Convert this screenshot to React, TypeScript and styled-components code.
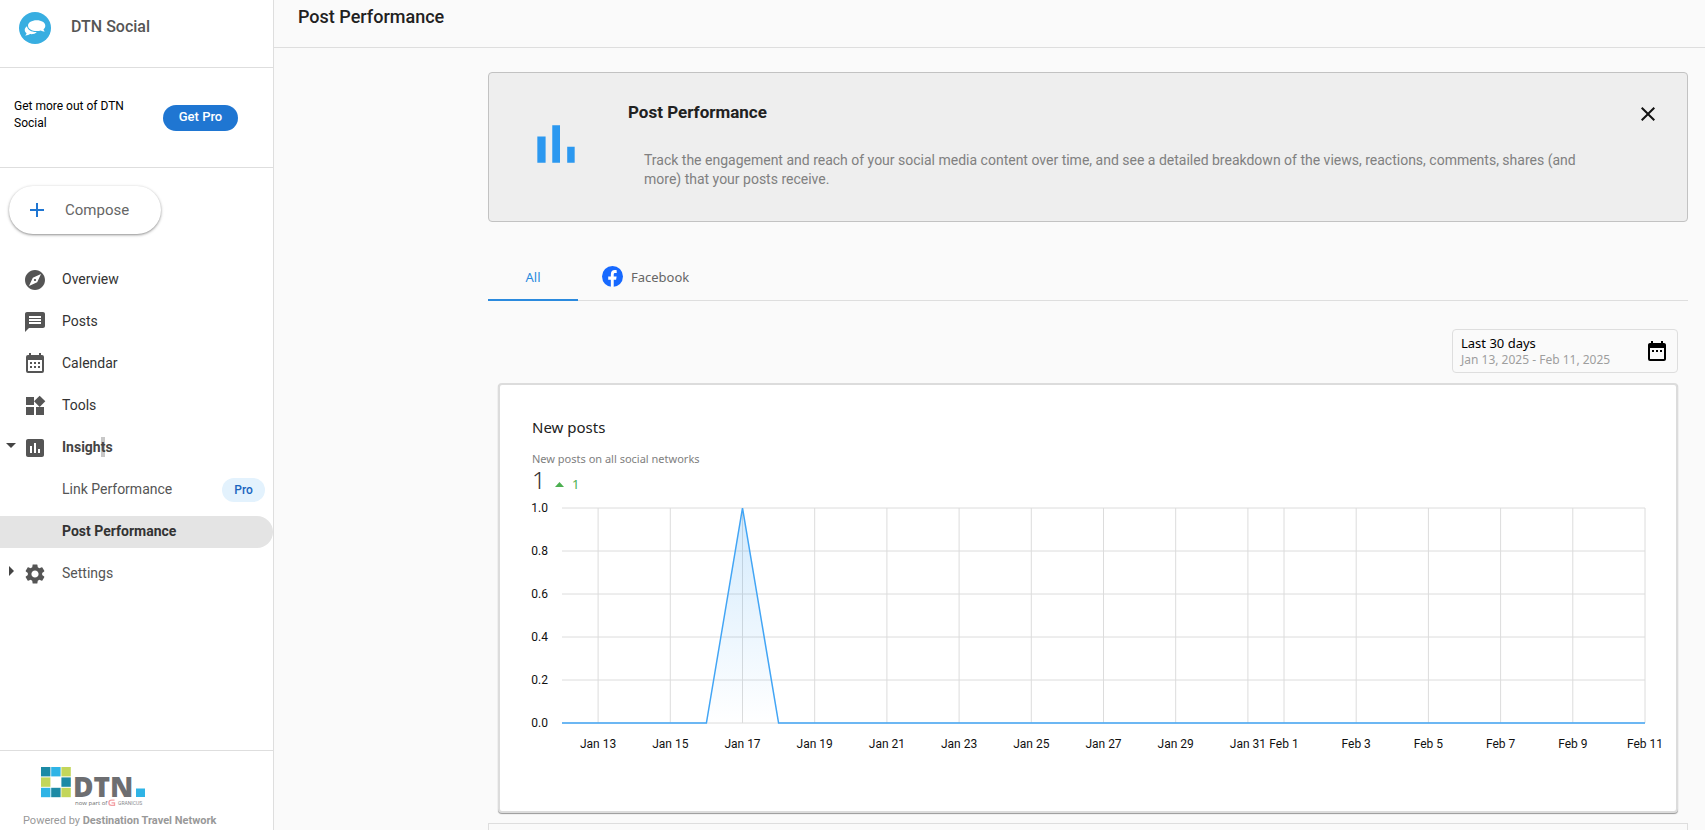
import React, { useLayoutEffect, useRef, useState } from "react";
import styled, { createGlobalStyle, css } from "styled-components";
import {
  MdClose,
  MdExplore,
  MdInsertChart,
  MdMessage,
  MdSettings,
  MdWidgets,
  MdDateRange,
} from "react-icons/md";

const sans = `Roboto, "Liberation Sans", sans-serif`;
const humanist = `"Noto Sans", "Open Sans", sans-serif`;
const line = "#dedede";

const GlobalStyle = createGlobalStyle`
  *, *::before, *::after { box-sizing: border-box; }
  body { margin: 0; background: #fafafa; font-family: ${sans}; color: #212121; }
  button { font: inherit; border: 0; padding: 0; background: none; cursor: pointer; }
  a { color: inherit; text-decoration: none; }
  h1, h2, h3, p, ul { margin: 0; padding: 0; }
  ul { list-style: none; }
`;

const Shell = styled.div`
  display: flex;
  height: 100vh;
`;

/* ---------- Sidebar ---------- */

const Sidebar = styled.aside`
  display: flex;
  flex-direction: column;
  flex: 0 0 274px;
  background: #fff;
  border-right: 1px solid ${line};
`;

const Brand = styled.div`
  display: flex;
  gap: 20px;
  height: 68px;
  padding: 12px 19px 0;
  border-bottom: 1px solid ${line};
`;

const BrandName = styled.span`
  font-size: 16px;
  line-height: 30px;
  font-weight: 500;
  color: #555;
`;

const Upsell = styled.div`
  display: flex;
  align-items: center;
  gap: 29px;
  height: 100px;
  padding: 0 14px;
  border-bottom: 1px solid ${line};
`;

const UpsellText = styled.p`
  width: 120px;
  padding-bottom: 6px;
  font-size: 12px;
  line-height: 17px;
  color: #000;
`;

const GetProButton = styled.button`
  width: 75px;
  height: 26px;
  padding-bottom: 2px;
  border-radius: 13px;
  background: #1f76d2;
  color: #fff;
  font-size: 13px;
  font-weight: 500;
`;

const ComposeButton = styled.button`
  display: flex;
  align-items: center;
  gap: 16px;
  width: 152px;
  height: 48px;
  margin: 18px 9px 30px;
  padding: 0 16px;
  border-radius: 24px;
  background: #fff;
  box-shadow: 0 1px 2px rgba(0, 0, 0, 0.3), 0 1px 3px 1px rgba(0, 0, 0, 0.12);
  color: #666;
  font-size: 15px;
`;

const NavList = styled.ul`
  display: flex;
  flex-direction: column;
  gap: 10px;
  flex: 1;
`;

const NavLink = styled.a<{ $tone?: string; $bold?: boolean; $active?: boolean }>`
  display: grid;
  grid-template-columns: 23px 24px 1fr auto;
  align-items: center;
  height: 32px;
  padding-right: 8px;
  color: ${(p) => p.$tone ?? "#333"};
  font-size: 14px;
  font-weight: ${(p) => (p.$bold ? 700 : 400)};
  ${(p) =>
    p.$active &&
    css`
      background: #e4e4e4;
      border-radius: 0 16px 16px 0;
    `}
`;

const NavArrow = styled.span`
  display: flex;
  padding: 0 0 6px 5px;
`;

const NavIcon = styled.span`
  display: flex;
  color: #555;
`;

const NavLabel = styled.span`
  padding-left: 15px;
  padding-bottom: 2px;
`;

const TextSelection = styled.span`
  padding: 2px 0;
  background: #c8c8c8;
`;

const ProBadge = styled.span`
  width: 43px;
  border-radius: 12px;
  background: #e3f2fd;
  color: #1a65c0;
  font-size: 12px;
  line-height: 24px;
  font-weight: 500;
  text-align: center;
`;

const SidebarFooter = styled.footer`
  display: flex;
  flex-direction: column;
  gap: 7px;
  height: 80px;
  padding: 16px 23px 0;
  border-top: 1px solid ${line};
  color: #999;
  font-size: 11px;
  line-height: 14px;
  white-space: nowrap;
`;

const FooterLogo = styled.svg`
  flex: none;
  margin-left: 17px;
`;

/* ---------- Main ---------- */

const Main = styled.main`
  display: flex;
  flex-direction: column;
  flex: 1;
  min-width: 0;
  overflow-y: auto;
  scrollbar-width: none;
`;

const TopBar = styled.header`
  flex: none;
  height: 48px;
  padding: 4px 24px 0;
  border-bottom: 1px solid ${line};
`;

const PageTitle = styled.h1`
  font-size: 18px;
  line-height: 26px;
  font-weight: 500;
`;

const Content = styled.div`
  display: flex;
  flex-direction: column;
  padding: 24px 17px 24px 214px;
`;

const InfoCard = styled.section`
  display: flex;
  align-items: flex-start;
  height: 150px;
  padding: 27px 27px 0 35px;
  border: 1px solid #c2c2c2;
  border-radius: 4px;
  background: #eee;
`;

const InfoIcon = styled.svg`
  flex: none;
  margin-top: 12px;
`;

const InfoText = styled.div`
  flex: 1;
  padding: 0 48px 0 40px;
`;

const InfoTitle = styled.h2`
  font-size: 17px;
  line-height: 24px;
  font-weight: 700;
`;

const InfoDescription = styled.p`
  padding: 27px 0 0 16px;
  color: #808080;
  font-size: 14px;
  line-height: 19px;
`;

const CloseButton = styled.button`
  display: flex;
  padding-top: 2px;
  color: #111;
`;

const Tabs = styled.div`
  display: flex;
  height: 49px;
  margin-top: 30px;
  border-bottom: 1px solid ${line};
`;

const Tab = styled.button<{ $active?: boolean }>`
  display: flex;
  align-items: center;
  justify-content: center;
  gap: 8px;
  height: 49px;
  min-width: 90px;
  padding: 2px 24px 0;
  border-bottom: 2px solid ${(p) => (p.$active ? "#2b8ade" : "transparent")};
  color: ${(p) => (p.$active ? "#2b8ade" : "#666")};
  font-family: ${humanist};
  font-size: 13px;
`;

const DateRange = styled.button`
  display: flex;
  align-items: center;
  justify-content: space-between;
  align-self: flex-end;
  width: 226px;
  height: 44px;
  margin: 28px 10px 10px;
  padding: 0 8px;
  border: 1px solid ${line};
  border-radius: 4px;
  color: #000;
  font-family: ${humanist};
  text-align: left;
`;

const DateText = styled.span`
  display: flex;
  flex-direction: column;
`;

const DateTitle = styled.span`
  font-size: 13px;
  line-height: 17px;
`;

const DateDetail = styled.span`
  color: #9e9e9e;
  font-size: 12px;
  line-height: 16px;
`;

const ChartCard = styled.section`
  height: 430px;
  margin: 0 10px;
  padding: 31px 31px 0 32px;
  border: 2px solid #dcdcdc;
  border-radius: 4px;
  background: #fff;
  box-shadow: 0 1px 1px rgba(0, 0, 0, 0.4);
  font-family: ${humanist};
`;

const ChartTitle = styled.h3`
  font-size: 15px;
  line-height: 22px;
  font-weight: 400;
`;

const ChartSubtitle = styled.p`
  padding-top: 11px;
  color: #808080;
  font-size: 11px;
  line-height: 20px;
`;

const Totals = styled.div`
  display: flex;
  align-items: center;
  gap: 9px;
  height: 26px;
  padding-bottom: 4px;
`;

const Total = styled.span`
  width: 14px;
  color: #333;
  font-size: 24px;
  line-height: 26px;
  font-weight: 300;
`;

const Delta = styled.span`
  display: flex;
  align-items: center;
  gap: 8px;
  padding-top: 8px;
  color: #4caf50;
  font-size: 13px;
  line-height: 16px;
`;

const ChartBox = styled.div`
  height: 260px;
`;

const ChartSvg = styled.svg`
  display: block;
  overflow: visible;
  font-family: ${sans};
  font-size: 12px;
`;

const NextCard = styled.section`
  height: 120px;
  margin-top: 10px;
  border: 1px solid ${line};
`;

/* ---------- Drawings ---------- */

const BubblesLogo = () => (
  <svg width="32" height="32" viewBox="0 0 32 32" role="img" aria-label="DTN Social">
    <circle cx="16" cy="16" r="16" fill="#38aee1" />
    <path
      fill="#fff"
      d="M8 14.2C5 16 5.2 19.6 7.6 21.2c-.2.9-.8 1.7-1.4 2.3 1.9.1 3.6-.4 4.9-1.4 2.8.3 5.2-.5 6.7-2.2C13.3 20.3 8.6 18.2 8 14.2Z"
    />
    <path
      fill="#fff"
      d="M17.7 8.3c4.9 0 8.6 2.3 8.6 5.4 0 1.4-.6 2.6-1.8 3.5.2 1 .7 1.6 1.3 2.3-1.5 0-2.9-.4-3.9-1.1-1.3.5-2.7.7-4.2.7-4.9 0-8.7-2.3-8.7-5.4s3.8-5.4 8.7-5.4Z"
    />
  </svg>
);

const CalendarIcon = () => (
  <svg width="24" height="24" viewBox="0 0 24 24" fill="currentColor" aria-hidden="true">
    <path d="M9 10v2H7v-2h2m4 0v2h-2v-2h2m4 0v2h-2v-2h2m2-7a2 2 0 0 1 2 2v14a2 2 0 0 1-2 2H5a2 2 0 0 1-2-2V5a2 2 0 0 1 2-2h1V1h2v2h8V1h2v2h1m0 16V8H5v11h14M9 14v2H7v-2h2m4 0v2h-2v-2h2m4 0v2h-2v-2h2Z" />
  </svg>
);

const Arrow = ({ open }: { open?: boolean }) => (
  <svg width="12" height="12" viewBox="0 0 12 12" fill="#444" aria-hidden="true">
    <path d={open ? "M1 4h10L6 9Z" : "M4 1v10l5-5Z"} />
  </svg>
);

const FacebookIcon = () => (
  <svg width="21" height="21" viewBox="0 0 24 24" aria-hidden="true">
    <circle cx="12" cy="12" r="12" fill="#1769ff" />
    <path
      fill="#fff"
      d="M10.1 24v-8.2H7.1v-3.7h3V9.6c0-3.3 1.7-4.9 4.5-4.9.9 0 1.6.1 2.2.2v3.2h-1.7c-1.3 0-1.7.7-1.7 1.9v2.1h3.3l-.6 3.7h-2.7V24Z"
    />
  </svg>
);

const squares = [
  ["#1c8aa5", "#2fb4e6", "#c3d65a"],
  ["#c3d65a", "#fff", "#1c8aa5"],
  ["#2fb4e6", "#1c8aa5", "#c3d65a"],
];

const DtnLogo = () => (
  <FooterLogo width="106" height="40" viewBox="0 0 106 40" role="img" aria-label="DTN, now part of Granicus">
    {squares.map((row, y) =>
      row.map((fill, x) => (
        <rect key={`${x}-${y}`} x={1 + x * 10.2} y={y * 10.4} width="9.4" height="9.4" fill={fill} />
      ))
    )}
    <text x="33" y="30" fill="#6d6e71" fontFamily="Open Sans" fontWeight="800" fontSize="28">
      DTN
    </text>
    <rect x="96" y="21.5" width="9" height="8.5" fill="#2fb4e6" />
    <text x="35" y="38" fill="#6d6e71" fontFamily="Open Sans" fontWeight="500" fontSize="6">
      now part of
    </text>
    <path d="M74.5 33.2h-3a2.6 2.6 0 0 0 0 5.2h3v-2.6h-3" fill="none" stroke="#f3a0a4" strokeWidth="1.3" />
    <text x="78" y="38" fill="#8a8b8e" fontFamily="Roboto" fontSize="5">
      GRANICUS
    </text>
  </FooterLogo>
);

/* ---------- Chart ---------- */

const dayLabels: [number, string][] = [
  [1, "Jan 13"], [3, "Jan 15"], [5, "Jan 17"], [7, "Jan 19"], [9, "Jan 21"],
  [11, "Jan 23"], [13, "Jan 25"], [15, "Jan 27"], [17, "Jan 29"], [19, "Jan 31"],
  [20, "Feb 1"], [22, "Feb 3"], [24, "Feb 5"], [26, "Feb 7"], [28, "Feb 9"], [30, "Feb 11"],
];
const values = Array.from({ length: 31 }, (_, day) => (day === 5 ? 1 : 0));
const ticks = [1, 0.8, 0.6, 0.4, 0.2, 0];

const PostsChart = () => {
  const box = useRef<HTMLDivElement>(null);
  const [width, setWidth] = useState(1113);

  useLayoutEffect(() => {
    const element = box.current;
    if (!element) return;
    const measure = () => setWidth(element.clientWidth);
    measure();
    const observer = new ResizeObserver(measure);
    observer.observe(element);
    return () => observer.disconnect();
  }, []);

  const left = 30;
  const top = 13;
  const plotHeight = 215;
  const bottom = top + plotHeight;
  const x = (day: number) => left + (day * (width - left)) / 30;
  const y = (value: number) => bottom - value * plotHeight;
  const points = values.map((value, day) => `${x(day)},${y(value)}`).join(" ");

  return (
    <ChartBox ref={box}>
      <ChartSvg width={width} height={260} role="img" aria-label="New posts per day">
        <defs>
          <linearGradient id="fill" x1="0" y1="0" x2="0" y2="1">
            <stop offset="0" stopColor="#2196f3" stopOpacity="0.2" />
            <stop offset="1" stopColor="#2196f3" stopOpacity="0" />
          </linearGradient>
        </defs>
        {ticks.map((tick) => (
          <g key={tick}>
            <line x1={left} x2={width} y1={y(tick)} y2={y(tick)} stroke="#dcdcdc" />
            <text x="16" y={y(tick) + 4} textAnchor="end" fill="#111">
              {tick.toFixed(1)}
            </text>
          </g>
        ))}
        {dayLabels.map(([day, label]) => (
          <g key={label}>
            <line x1={x(day)} x2={x(day)} y1={top} y2={bottom} stroke="#dcdcdc" />
            <text x={x(day)} y={bottom + 25} textAnchor="middle" fill="#111">
              {label}
            </text>
          </g>
        ))}
        <polygon points={`${x(0)},${bottom} ${points} ${x(30)},${bottom}`} fill="url(#fill)" />
        <polyline points={points} fill="none" stroke="#42a5f5" strokeWidth="1.5" />
      </ChartSvg>
    </ChartBox>
  );
};

/* ---------- Page ---------- */

type Item = {
  id: string;
  label: React.ReactNode;
  icon?: React.ReactNode;
  arrow?: boolean;
  open?: boolean;
  bold?: boolean;
  active?: boolean;
  pro?: boolean;
  tone?: string;
};

const items: Item[] = [
  { id: "overview", label: "Overview", icon: <MdExplore size={24} /> },
  { id: "posts", label: "Posts", icon: <MdMessage size={24} /> },
  { id: "calendar", label: "Calendar", icon: <CalendarIcon /> },
  { id: "tools", label: "Tools", icon: <MdWidgets size={24} /> },
  {
    id: "insights",
    label: <>Insigh<TextSelection>t</TextSelection>s</>,
    icon: <MdInsertChart size={24} />,
    arrow: true,
    open: true,
    bold: true,
    tone: "#444",
  },
  { id: "link-performance", label: "Link Performance", pro: true, tone: "#555" },
  { id: "post-performance", label: "Post Performance", bold: true, active: true },
  { id: "settings", label: "Settings", icon: <MdSettings size={24} />, arrow: true, tone: "#555" },
];

export default function App() {
  return (
    <Shell>
      <GlobalStyle />
      <Sidebar>
        <Brand>
          <BubblesLogo />
          <BrandName>DTN Social</BrandName>
        </Brand>
        <Upsell>
          <UpsellText>Get more out of DTN Social</UpsellText>
          <GetProButton>Get Pro</GetProButton>
        </Upsell>
        <ComposeButton>
          <svg width="24" height="24" viewBox="0 0 24 24" aria-hidden="true">
            <path d="M12 5v14M5 12h14" stroke="#1f76d2" strokeWidth="2" />
          </svg>
          Compose
        </ComposeButton>
        <NavList>
          {items.map((item) => (
            <li key={item.id}>
              <NavLink href={`#${item.id}`} $tone={item.tone} $bold={item.bold} $active={item.active}>
                <NavArrow>{item.arrow && <Arrow open={item.open} />}</NavArrow>
                <NavIcon>{item.icon}</NavIcon>
                <NavLabel>{item.label}</NavLabel>
                {item.pro && <ProBadge>Pro</ProBadge>}
              </NavLink>
            </li>
          ))}
        </NavList>
        <SidebarFooter>
          <DtnLogo />
          <span>
            Powered by <b>Destination Travel Network</b>
          </span>
        </SidebarFooter>
      </Sidebar>
      <Main>
        <TopBar>
          <PageTitle>Post Performance</PageTitle>
        </TopBar>
        <Content>
          <InfoCard>
            <InfoIcon width="64" height="64" viewBox="0 0 24 24" fill="#2b98f0" aria-hidden="true">
              <path d="M5 9.2h3.1V19H5Zm5.6-4.2h2.9v14h-2.9Zm5.6 8H19v6h-2.8Z" />
            </InfoIcon>
            <InfoText>
              <InfoTitle>Post Performance</InfoTitle>
              <InfoDescription>
                Track the engagement and reach of your social media content over time, and see a detailed
                breakdown of the views, reactions, comments, shares (and more) that your posts receive.
              </InfoDescription>
            </InfoText>
            <CloseButton aria-label="Close">
              <MdClose size={24} />
            </CloseButton>
          </InfoCard>
          <Tabs role="tablist">
            <Tab role="tab" aria-selected="true" $active>
              All
            </Tab>
            <Tab role="tab" aria-selected="false">
              <FacebookIcon />
              Facebook
            </Tab>
          </Tabs>
          <DateRange>
            <DateText>
              <DateTitle>Last 30 days</DateTitle>
              <DateDetail>Jan 13, 2025 - Feb 11, 2025</DateDetail>
            </DateText>
            <MdDateRange size={24} />
          </DateRange>
          <ChartCard>
            <ChartTitle>New posts</ChartTitle>
            <ChartSubtitle>New posts on all social networks</ChartSubtitle>
            <Totals>
              <Total>1</Total>
              <Delta>
                <svg width="9" height="5" viewBox="0 0 9 5" fill="currentColor" aria-hidden="true">
                  <path d="M0 5 4.5 0 9 5Z" />
                </svg>
                1
              </Delta>
            </Totals>
            <PostsChart />
          </ChartCard>
          <NextCard />
        </Content>
      </Main>
    </Shell>
  );
}
